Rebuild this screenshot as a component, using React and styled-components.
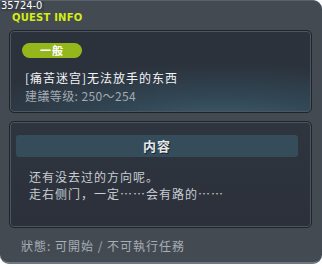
import React from "react";
import styled, { createGlobalStyle } from "styled-components";

const GlobalStyle = createGlobalStyle`
  html, body {
    margin: 0;
    padding: 0;
    background: #ffffff;
  }
  body {
    font-family: "Noto Sans CJK SC", "Noto Sans", sans-serif;
  }
`;

const Window = styled.div`
  position: relative;
  width: 322px;
  height: 264px;
  box-sizing: border-box;
  background: #434a52;
  border-radius: 0 9px 9px 9px;
  border-top: 1px solid #59626c;
  border-bottom: 2px solid #6b7782;
  display: flex;
  flex-direction: column;
  overflow: hidden;
`;

const Header = styled.div`
  height: 29px;
  display: flex;
  flex-direction: column;
  padding-left: 1px;
`;

const QuestId = styled.div`
  font-family: "DejaVu Sans Condensed", "DejaVu Sans", sans-serif;
  font-size: 11px;
  line-height: 9px;
  color: #ffffff;
  height: 10px;
  background: #3a4048;
  align-self: flex-start;
  padding-right: 2px;
`;

const Title = styled.div`
  font-family: "DejaVu Sans", sans-serif;
  font-weight: bold;
  font-size: 10px;
  line-height: 11px;
  margin: 1px 0 0 11px;
  color: #d6ec12;
  letter-spacing: 0.2px;
`;

const Panel = styled.div`
  margin: 0 10px 0 9px;
  height: ${(p) => p.h}px;
  box-sizing: border-box;
  border: 1px solid #1f242b;
  border-radius: 5px;
  box-shadow: inset 0 0 0 1px #4c5660;
  background: ${(p) =>
    p.glow
      ? "radial-gradient(ellipse 90% 70% at 70% 110%, #3d5b6b 0%, #314553 45%, #2b323c 100%)"
      : "linear-gradient(#2f353f, #2b303a)"};
  display: flex;
  flex-direction: column;
`;

const SummaryPanel = styled(Panel)`
  padding: 12px 12px 0;
`;

const ContentPanel = styled(Panel)`
  margin-top: 8px;
  padding: 13px 13px 0 6px;
`;

const Badge = styled.div`
  width: 60px;
  height: 15px;
  border-radius: 8px;
  background: #94b81c;
  color: #ffffff;
  font-weight: bold;
  font-size: 11px;
  line-height: 15px;
  text-align: center;
  letter-spacing: 1px;
`;

const QuestName = styled.div`
  margin-top: 12px;
  margin-left: 3px;
  font-size: 12px;
  letter-spacing: 1px;
  line-height: 15px;
  color: #f2f4f6;
`;

const Level = styled.div`
  margin-top: 4px;
  margin-left: 3px;
  font-size: 12px;
  letter-spacing: 0.4px;
  line-height: 14px;
  color: #a3aab1;
`;

const SectionBar = styled.div`
  height: 22px;
  border-radius: 3px;
  background: #354c5a;
  color: #e3e8ec;
  font-weight: bold;
  font-size: 13px;
  line-height: 22px;
  text-align: center;
  letter-spacing: 1px;
  text-shadow: 1px 1px 0 #1b2228;
`;

const Body = styled.div`
  margin-top: 11px;
  margin-left: 13px;
  font-size: 12px;
  letter-spacing: 1px;
  line-height: 17px;
  color: #c7ccd1;
`;

const Status = styled.div`
  margin: 10px 0 0 21px;
  font-size: 12px;
  letter-spacing: 1px;
  line-height: 16px;
  color: #a7aeb5;
`;

export default function App() {
  return (
    <>
      <GlobalStyle />
      <Window>
        <Header>
          <QuestId>35724-0</QuestId>
          <Title>QUEST INFO</Title>
        </Header>
        <SummaryPanel h={83} glow>
          <Badge>一般</Badge>
          <QuestName>[痛苦迷宫]无法放手的东西</QuestName>
          <Level>建議等级: 250～254</Level>
        </SummaryPanel>
        <ContentPanel h={107}>
          <SectionBar>内容</SectionBar>
          <Body>
            还有没去过的方向呢。
            <br />
            走右侧门，一定……会有路的……
          </Body>
        </ContentPanel>
        <Status>狀態: 可開始 / 不可執行任務</Status>
      </Window>
    </>
  );
}
